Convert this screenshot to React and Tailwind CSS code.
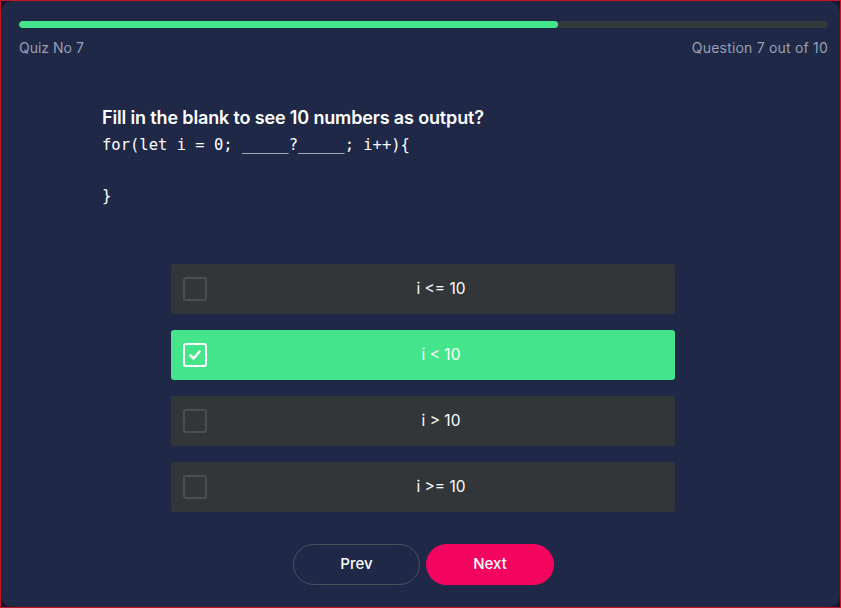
import React from "react";

const options = ["i <= 10", "i < 10", "i > 10", "i >= 10"];

function Check({ checked }) {
  if (checked) {
    return (
      <div className="w-6 h-6 rounded-[3px] border-2 border-white flex items-center justify-center">
        <svg width="14" height="14" viewBox="0 0 14 14" fill="none">
          <path d="M2.5 7.5 L5.5 10.5 L11.5 3.5" stroke="white" strokeWidth="2.5" strokeLinecap="round" strokeLinejoin="round" />
        </svg>
      </div>
    );
  }
  return <div className="w-6 h-6 rounded-[3px] border-2 border-[#4a4e51]" />;
}

export default function App() {
  return (
    <div className="w-[841px] h-[608px] bg-[#17173a] border border-[#c8141e] overflow-hidden" style={{ fontFamily: "Inter, 'Noto Sans', sans-serif" }}>
      <div className="w-full h-full bg-[#1f2847] rounded-[12px] pl-[18px] pr-[12px] pt-[20px] flex flex-col">
        <div className="h-[7px] w-full rounded-full bg-[#343a3c] overflow-hidden">
          <div className="h-full w-[66.6%] rounded-full bg-[#45e68b]" />
        </div>
        <div className="flex justify-between mt-[11px] text-[14px] leading-[18px] text-[#9aa0b0]">
          <span>Quiz No 7</span>
          <span className="tracking-[0.2px]">Question 7 out of 10</span>
        </div>
        <div className="pl-[83px] mt-[49px]">
          <div className="text-[18px] leading-[24px] font-semibold text-white tracking-[-0.15px]">
            Fill in the blank to see 10 numbers as output?
          </div>
          <pre className="text-[15.5px] leading-[25.5px] text-white mt-[3px]" style={{ fontFamily: "'DejaVu Sans Mono', 'Liberation Mono', monospace" }}>
{`for(let i = 0; _____?_____; i++){

}`}
          </pre>
        </div>
        <div className="flex flex-col items-center gap-4 mt-[54px] pr-[1px]">
          {options.map((o, i) => {
            const sel = i === 1;
            return (
              <div
                key={o}
                className={`w-[504px] h-[50px] rounded-[3px] flex items-center pl-3 ${sel ? "bg-[#45e68b]" : "bg-[#323639]"}`}
              >
                <Check checked={sel} />
                <span className="flex-1 text-center text-[15.5px] text-white">{o}</span>
              </div>
            );
          })}
        </div>
        <div className="flex justify-center gap-[6px] mt-[32px]">
          <button className="w-[127px] h-[41px] rounded-full border border-[#4a5160] text-white text-[15px] font-medium">
            Prev
          </button>
          <button className="w-[128px] h-[41px] rounded-full bg-[#f3055f] text-white text-[15px] font-medium">
            Next
          </button>
        </div>
      </div>
    </div>
  );
}
